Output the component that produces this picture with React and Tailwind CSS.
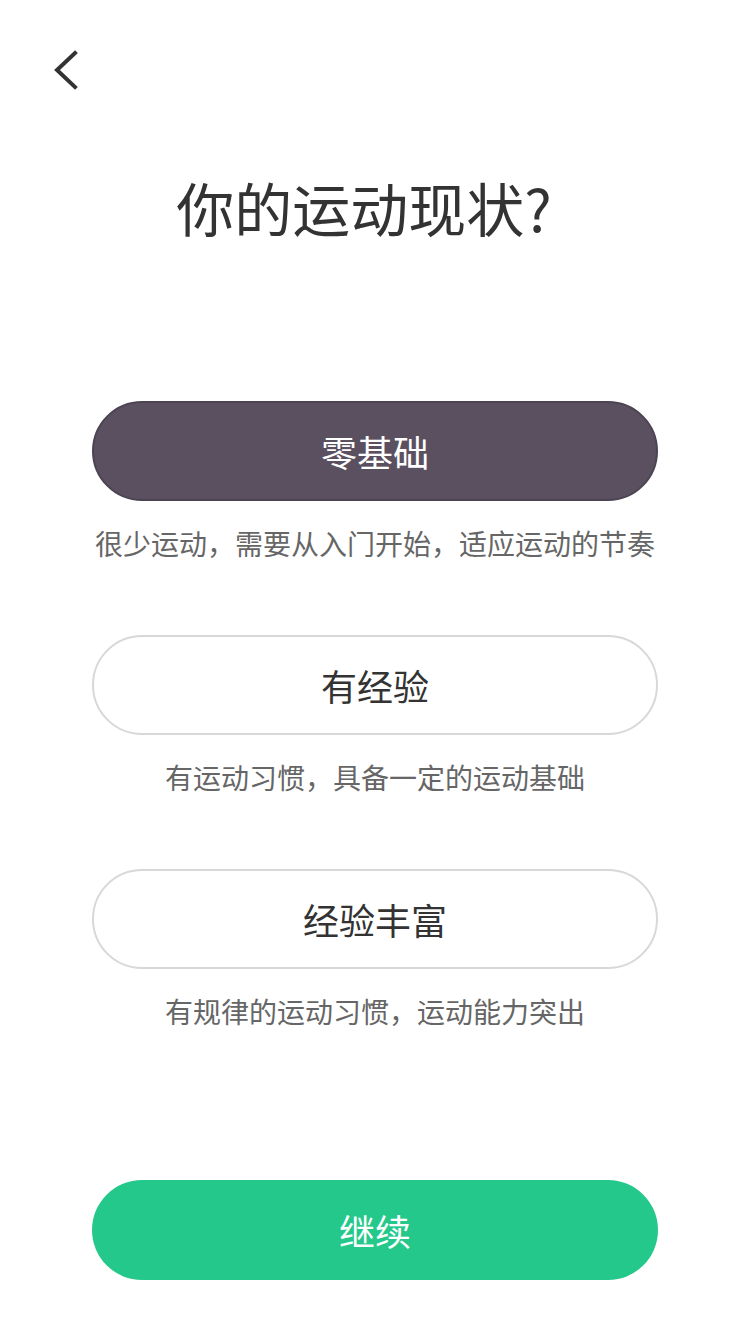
import { useState } from "react";

const options = [
  { id: "zero", label: "零基础", desc: "很少运动，需要从入门开始，适应运动的节奏" },
  { id: "some", label: "有经验", desc: "有运动习惯，具备一定的运动基础" },
  { id: "rich", label: "经验丰富", desc: "有规律的运动习惯，运动能力突出" },
];

const BackIcon = () => (
  <svg width="40" height="48" viewBox="0 0 40 48" fill="none">
    <path d="M30 7 L12 24 L30 41" stroke="#333333" strokeWidth="4" strokeLinecap="square" />
  </svg>
);

export default function App() {
  const [selected, setSelected] = useState("zero");

  return (
    <div
      className="w-[750px] h-[1334px] bg-white flex flex-col"
      style={{ fontFamily: '"Noto Sans CJK SC", "Noto Sans", sans-serif' }}
    >
      {/* header */}
      <div className="h-[140px] pl-[45px] pt-[46px]">
        <button className="block">
          <BackIcon />
        </button>
      </div>

      <h1 className="text-center text-[58px] leading-[64px] text-[#333333] mt-[35px] pr-[22px]">
        你的运动现状?
      </h1>

      {/* options */}
      <div className="flex flex-col items-center mt-[162px]">
        {options.map((opt) => {
          const active = selected === opt.id;
          return (
            <div key={opt.id} className="flex flex-col items-center mb-[72px]">
              <button
                onClick={() => setSelected(opt.id)}
                className={
                  active
                    ? "w-[566px] h-[100px] rounded-full bg-[#5a5060] border-2 border-[#4d4453] text-white text-[36px]"
                    : "w-[566px] h-[100px] rounded-full bg-white border-2 border-[#d8d8d8] text-[#333333] text-[36px]"
                }
              >
                {opt.label}
              </button>
              <p className="mt-[22px] text-[28px] leading-[40px] text-[#666666]">{opt.desc}</p>
            </div>
          );
        })}
      </div>

      <div className="flex-1" />

      <div className="flex justify-center pb-[54px]">
        <button className="w-[566px] h-[100px] rounded-full bg-[#25c88b] text-white text-[36px]">
          继续
        </button>
      </div>
    </div>
  );
}
